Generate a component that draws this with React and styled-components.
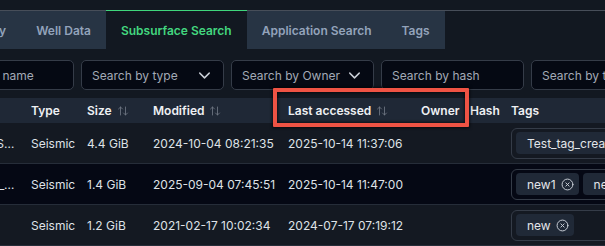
import React from "react";
import styled, { createGlobalStyle } from "styled-components";
import { ChevronDown, ArrowUpDown, CircleX } from "lucide-react";

const GlobalStyle = createGlobalStyle`
  html, body { margin: 0; padding: 0; background: #121821; overflow: hidden; }
  body { font-family: Inter, "Noto Sans", sans-serif; color: #e5e7eb; }
  * { box-sizing: border-box; }
`;

const Page = styled.div`
  position: relative;
  width: 605px;
  height: 246px;
  padding-top: 10px;
  overflow: hidden;
`;

const TabBar = styled.div`
  display: flex;
  height: 39px;
  margin-left: ${(p) => p.$offset}px;
  width: 900px;
`;

const Tab = styled.div`
  display: flex;
  align-items: center;
  padding: 1px 15px 0;
  font-size: 12px;
  font-weight: 600;
  white-space: nowrap;
  border-top: 1px solid ${(p) => (p.$active ? "#3fd67c" : "#474e59")};
  background: ${(p) => (p.$active ? "#121821" : "#273444")};
  color: ${(p) => (p.$active ? "#43d67f" : "#93a3bb")};
`;

const TabFill = styled.div`
  flex: 1;
  border-top: 1px solid #474e59;
`;

const FilterRow = styled.div`
  display: flex;
  gap: 7px;
  margin-top: 11px;
  margin-left: ${(p) => p.$offset}px;
  width: 900px;
`;

const Field = styled.div`
  flex: none;
  width: 143px;
  height: 30px;
  display: flex;
  align-items: center;
  justify-content: space-between;
  padding: 0 9px 0 10px;
  background: #050913;
  border: 1px solid #353c48;
  border-radius: 5px;
  font-size: 12px;
  color: #a3aab6;
  white-space: nowrap;
  overflow: hidden;
`;

const Chevron = styled(ChevronDown)`
  flex: none;
  color: #c9ced6;
`;

const Table = styled.div`
  margin-top: 8px;
  margin-left: ${(p) => p.$offset}px;
  width: 900px;
`;

const cols = "150px 56px 66px 135px 133px 49px 41px 300px";

const HeadRow = styled.div`
  display: grid;
  grid-template-columns: ${cols};
  height: 25px;
  align-items: center;
  background: #1f2836;
`;

const HeadCell = styled.div`
  display: flex;
  align-items: center;
  gap: 5px;
  padding-left: 6px;
  font-size: 12px;
  font-weight: 600;
  color: #eef0f3;
  white-space: nowrap;
`;

const SortIcon = styled(ArrowUpDown)`
  color: #737b88;
`;

const Row = styled.div`
  display: grid;
  grid-template-columns: ${cols};
  height: 41px;
  align-items: center;
  border-bottom: 1px solid #262d39;
  background: ${(p) => (p.$dark ? "#050814" : "#141922")};
`;

const Cell = styled.div`
  padding-left: 6px;
  font-size: 12px;
  color: #dfe2e7;
  white-space: nowrap;
  overflow: hidden;
  text-overflow: ${(p) => (p.$ellipsis ? "ellipsis" : "clip")};
  padding-right: ${(p) => (p.$ellipsis ? "10px" : "0")};
`;

const TagsCell = styled.div`
  padding-left: 6px;
  align-self: stretch;
  display: flex;
  align-items: center;
`;

const TagBox = styled.div`
  display: flex;
  gap: 4px;
  align-items: center;
  height: 31px;
  width: 300px;
  padding: 0 4px;
  border: 1px solid #353c48;
  border-radius: 6px;
`;

const Chip = styled.div`
  display: flex;
  align-items: center;
  gap: 5px;
  height: 22px;
  padding: 0 5px 0 11px;
  background: #202937;
  border-radius: 4px;
  font-size: 12px;
  color: #e3e6ea;
  white-space: nowrap;
`;

const ChipX = styled(CircleX)`
  color: #c9ced6;
`;

const Highlight = styled.div`
  position: absolute;
  left: 273px;
  top: 88px;
  width: 196px;
  height: 39px;
  border: 4px solid #ef5344;
  border-radius: 1px;
  box-shadow: 0 0 3px 1px rgba(0, 0, 0, 0.6), inset 0 0 3px 1px rgba(0, 0, 0, 0.6);
  pointer-events: none;
`;

const rows = [
  {
    name: "Seismic_volume_20_S_data",
    type: "Seismic",
    size: "4.4 GiB",
    modified: "2024-10-04 08:21:35",
    accessed: "2025-10-14 11:37:06",
    tags: [{ label: "Test_tag_created_for_demo", removable: false }],
  },
  {
    name: "Seismic_volume_202_data",
    type: "Seismic",
    size: "1.4 GiB",
    modified: "2025-09-04 07:45:51",
    accessed: "2025-10-14 11:47:00",
    tags: [
      { label: "new1", removable: true },
      { label: "new2", removable: true },
    ],
    dark: true,
  },
  {
    name: "",
    type: "Seismic",
    size: "1.2 GiB",
    modified: "2021-02-17 10:02:34",
    accessed: "2024-07-17 07:19:12",
    tags: [{ label: "new", removable: true }],
  },
];

export default function App() {
  return (
    <>
      <GlobalStyle />
      <Page>
        <TabBar $offset={-64}>
          <Tab>Inventory</Tab>
          <Tab>Well Data</Tab>
          <Tab $active>Subsurface Search</Tab>
          <Tab>Application Search</Tab>
          <Tab>Tags</Tab>
          <TabFill />
        </TabBar>
        <FilterRow $offset={-69}>
          <Field>Search by name</Field>
          <Field>
            Search by type <Chevron size={19} strokeWidth={1.8} />
          </Field>
          <Field>
            Search by Owner <Chevron size={19} strokeWidth={1.8} />
          </Field>
          <Field>Search by hash</Field>
          <Field>Search by tag</Field>
        </FilterRow>
        <Table $offset={-125}>
          <HeadRow>
            <HeadCell>Name</HeadCell>
            <HeadCell>Type</HeadCell>
            <HeadCell>
              Size <SortIcon size={12} strokeWidth={1.6} />
            </HeadCell>
            <HeadCell>
              Modified <SortIcon size={12} strokeWidth={1.6} />
            </HeadCell>
            <HeadCell>
              Last accessed <SortIcon size={12} strokeWidth={1.6} />
            </HeadCell>
            <HeadCell>Owner</HeadCell>
            <HeadCell>Hash</HeadCell>
            <HeadCell>Tags</HeadCell>
          </HeadRow>
          {rows.map((r, i) => (
            <Row key={i} $dark={r.dark}>
              <Cell $ellipsis>{r.name}</Cell>
              <Cell>{r.type}</Cell>
              <Cell>{r.size}</Cell>
              <Cell>{r.modified}</Cell>
              <Cell>{r.accessed}</Cell>
              <Cell />
              <Cell />
              <TagsCell>
                <TagBox>
                  {r.tags.map((t) => (
                    <Chip key={t.label}>
                      {t.label}
                      {t.removable && <ChipX size={13} strokeWidth={1.8} />}
                    </Chip>
                  ))}
                </TagBox>
              </TagsCell>
            </Row>
          ))}
        </Table>
        <Highlight />
      </Page>
    </>
  );
}
